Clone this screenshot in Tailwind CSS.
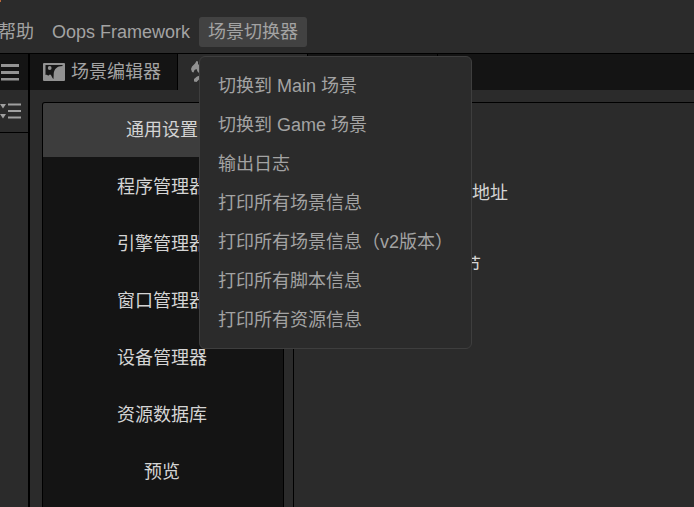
<!DOCTYPE html>
<html lang="zh-CN">
<head>
<meta charset="utf-8">
<title>Oops Framework</title>
<script src="https://cdn.jsdelivr.net/npm/@tailwindcss/browser@4"></script>
</head>
<body class="relative flex h-[507px] w-[694px] flex-col overflow-hidden bg-[#2b2b2b] font-['Liberation_Sans','Noto_Sans_CJK_SC',sans-serif] text-[18px] leading-[30px] text-[#a3a3a3] whitespace-nowrap">
  <div class="absolute top-0 left-0 h-[2px] w-px bg-[#b9683a]"></div>
  <header class="flex h-[54px] shrink-0 border-b border-black pt-[17px]">
    <nav class="-ml-[11px] flex h-[30px]">
      <div class="w-[54px] px-[9px]">帮助</div>
      <div class="w-[156px] px-[9px]">Oops Framework</div>
      <div class="w-[108px] rounded-[3px] bg-[#424242] px-[9px]">场景切换器</div>
    </nav>
  </header>
  <div class="flex min-h-0 grow">
    <aside class="flex w-[30px] shrink-0 flex-col border-r-2 border-black">
      <div class="h-9 bg-[#141414] pt-[10px]">
        <svg class="block" width="20" height="17" fill="#949494"><path d="M1 0h18v3H1zM1 7h18v3H1zM1 14h18v2.500H1z"/></svg>
      </div>
      <div class="h-[43px] border-b border-black pt-[13px]">
        <svg class="block" width="22" height="17" fill="#a0a0a0"><path d="M0 1h6L3 5.500zM0 11h6L3 15.500zM8 .5h13v2H8zM8 7h13v2H8zM8 13.500h13v2H8z"/></svg>
      </div>
    </aside>
    <main class="flex grow flex-col">
      <div class="flex h-9 shrink-0 bg-[#141414]">
        <div class="flex w-[148px] items-center border-r border-black pl-[13px]">
          <svg class="mr-[6px] block" width="22" height="18"><rect width="22" height="18" rx="1" fill="#929292"/><path d="M2.500 2H19.500V3C14 3 11 6 10.700 11L10.500 16C9 15 8.500 11.500 7 11.500 6 11.500 6 13 5 12.500 4 11.500 3.500 11.500 2.500 12z" fill="#161616"/><circle cx="6.700" cy="5" r="1.900" fill="#929292"/></svg>
          <span>场景编辑器</span>
        </div>
        <div class="w-[130px] border-r border-black bg-[#2b2b2b] pt-[6px] pl-[13px]">
          <svg class="block" width="20" height="24" fill="#929292"><path d="M5.500 1 7 1.500V4L9 6V14L6.500 11.500 5.500 9 3.500 10 2.500 12.500 1 12 0 9 1 6.500 4 3.500zM9 15.500V18.500L5.500 22 3 21.500V19L6 16.500z"/></svg>
        </div>
        <div class="w-[130px] border-r border-black"></div>
      </div>
      <div class="flex min-h-0 grow gap-[9px] pt-3 pl-3">
        <div class="flex w-[242px] shrink-0 flex-col gap-[3px] overflow-hidden rounded-tl-[3px] border-x border-t border-black bg-[#141414] text-center leading-[54px] text-[#d4d4d4]">
          <div class="h-[54px] shrink-0 bg-[#3d3d3d] pr-[2px]">通用设置</div>
          <div class="h-[54px] shrink-0 pr-[2px]">程序管理器</div>
          <div class="h-[54px] shrink-0 pr-[2px]">引擎管理器</div>
          <div class="h-[54px] shrink-0 pr-[2px]">窗口管理器</div>
          <div class="h-[54px] shrink-0 pr-[2px]">设备管理器</div>
          <div class="h-[54px] shrink-0 pr-[2px]">资源数据库</div>
          <div class="h-[54px] shrink-0 pr-[2px]">预览</div>
        </div>
        <section class="grow border-t border-l border-black pt-[75px] text-[#d4d4d4]">
          <div class="w-[214px] text-right">地址</div>
          <div class="mt-[42px] w-[187px] text-right">节</div>
        </section>
      </div>
    </main>
  </div>
  <div class="absolute top-[56px] left-[199px] h-[293px] w-[273px] rounded-[6px] border border-[#3e3e3e] bg-[#2b2b2b] pt-[10px] pl-[18px] leading-[39px]">
    <div>切换到 Main 场景</div>
    <div>切换到 Game 场景</div>
    <div>输出日志</div>
    <div>打印所有场景信息</div>
    <div>打印所有场景信息（v2版本）</div>
    <div>打印所有脚本信息</div>
    <div>打印所有资源信息</div>
  </div>
</body>
</html>
